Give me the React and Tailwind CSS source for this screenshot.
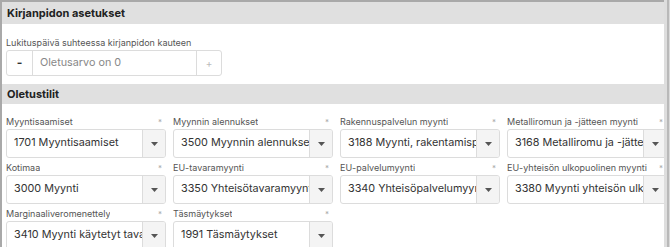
const FIELDS = [
  { label: 'Myyntisaamiset', value: '1701 Myyntisaamiset' },
  { label: 'Myynnin alennukset', value: '3500 Myynnin alennukset' },
  { label: 'Rakennuspalvelun myynti', value: '3188 Myynti, rakentamispalvelut' },
  { label: 'Metalliromun ja -jätteen myynti', value: '3168 Metalliromu ja -jätteet' },
  { label: 'Kotimaa', value: '3000 Myynti' },
  { label: 'EU-tavaramyynti', value: '3350 Yhteisötavaramyynti' },
  { label: 'EU-palvelumyynti', value: '3340 Yhteisöpalvelumyynti' },
  { label: 'EU-yhteisön ulkopuolinen myynti', value: '3380 Myynti yhteisön ulkopuolelle' },
  { label: 'Marginaaliveromenettely', value: '3410 Myynti käytetyt tavarat' },
  { label: 'Täsmäytykset', value: '1991 Täsmäytykset' },
]

function SectionHeader({ children, className = '' }) {
  return (
    <div className={`bg-[#e0e0e0] shrink-0 flex items-center px-[5px] text-[11px] font-bold text-[#222] ${className}`}>
      {children}
    </div>
  )
}

function AccountSelect({ label, value }) {
  return (
    <div className="flex flex-col min-w-0">
      <div className="flex items-center justify-between h-[12px] text-[9px] text-[#555] pr-[4px]">
        <span className="truncate">{label}</span>
        <span className="text-[#aaa] text-[8px]">*</span>
      </div>
      <div className="mt-[1px] h-[29px] flex border border-[#dcdcdc] rounded-[3px] bg-white overflow-hidden">
        <div className="flex-1 min-w-0 overflow-hidden whitespace-nowrap pl-[7px] flex items-center text-[10.8px] text-[#333]">
          {value}
        </div>
        <div className="w-[23px] shrink-0 bg-[#f4f4f4] border-l border-[#dcdcdc] flex items-center justify-center">
          <svg width="7" height="4" viewBox="0 0 7 4">
            <path d="M0 0 L7 0 L3.5 4 Z" fill="#555" />
          </svg>
        </div>
      </div>
    </div>
  )
}

export default function App() {
  return (
    <div className="w-[670px] h-[247px] overflow-hidden bg-white flex" style={{ fontFamily: 'Inter, "Noto Sans", sans-serif' }}>
      <div className="w-[664px] shrink-0 overflow-hidden border-l-2 border-t-2 border-[#a9a9a9] flex flex-col">
        <SectionHeader className="h-[22px]">Kirjanpidon asetukset</SectionHeader>
        <div className="shrink-0 px-[4px] pt-[13px] pb-[8px]">
          <div className="text-[9px] text-[#555] h-[12px] leading-[12px]">Lukituspäivä suhteessa kirjanpidon kauteen</div>
          <div className="mt-[1px] w-[216px] h-[26px] flex border border-[#dcdcdc] rounded-[3px]">
            <div className="w-[26px] border-r border-[#dcdcdc] flex items-center justify-center text-[12px] text-[#333] font-bold">-</div>
            <div className="flex-1 pl-[7px] flex items-center text-[10.8px] text-[#888]">Oletusarvo on 0</div>
            <div className="w-[25px] border-l border-[#dcdcdc] flex items-center justify-center text-[10px] text-[#bbb]">+</div>
          </div>
        </div>
        <SectionHeader className="h-[20px]">Oletustilit</SectionHeader>
        <div className="shrink-0 pl-[4px] pt-[12px] grid grid-cols-[repeat(4,160px)] gap-x-[7px] gap-y-[4px]">
          {FIELDS.map(f => (
            <AccountSelect key={f.label} {...f} />
          ))}
        </div>
      </div>
      <div className="w-[3px] shrink-0 bg-[#dedede]" />
      <div className="w-[2px] shrink-0 bg-[#b9b9b9]" />
      <div className="w-[1px] shrink-0 bg-[#dadada]" />
    </div>
  )
}
